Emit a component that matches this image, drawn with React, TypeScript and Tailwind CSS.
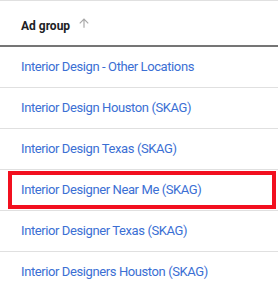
const adGroups = [
  'Interior Design - Other Locations',
  'Interior Design Houston (SKAG)',
  'Interior Design Texas (SKAG)',
  'Interior Designer Near Me (SKAG)',
  'Interior Designer Texas (SKAG)',
  'Interior Designers Houston (SKAG)',
];

function SortArrow() {
  return (
    <svg viewBox="0 0 24 24" className="w-[14px] h-[14px] ml-[7px] mb-[5px]" fill="#a8a8a8">
      <path d="M4 12l1.41 1.41L11 7.83V20h2V7.83l5.58 5.59L20 12l-8-8-8 8z" />
    </svg>
  );
}

export default function App() {
  return (
    <div className="w-[278px] h-[292px] overflow-hidden bg-white font-['Roboto',sans-serif]">
      <div className="border-t border-[#e0e0e0]">
        <div className="h-[46px] flex items-center pl-[21px] pt-[5px] border-b-2 border-[#757575]">
          <span className="text-[12px] font-bold text-[#202124]">Ad group</span>
          <SortArrow />
        </div>
        {adGroups.map((name, i) => (
          <div
            key={name}
            className="relative h-[41px] flex items-center pl-[21px] border-b border-[#e0e0e0]"
          >
            <span className="text-[13px] tracking-[-0.4px] text-[#3b6fd4]">{name}</span>
            {i === 3 && (
              <div className="absolute left-[8px] right-[2px] top-[1px] bottom-[1px] border-4 border-[#f2101f]" />
            )}
          </div>
        ))}
      </div>
    </div>
  );
}
